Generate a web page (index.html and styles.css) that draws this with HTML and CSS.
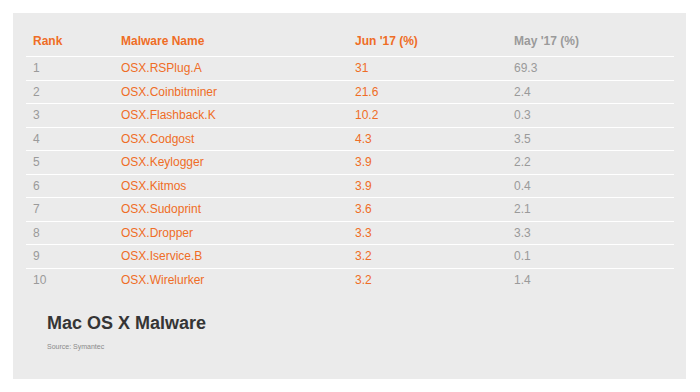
FILE: index.html
```html
<!DOCTYPE html>
<html lang="en">
<head>
<meta charset="utf-8">
<title>Mac OS X Malware</title>
<link rel="stylesheet" href="styles.css">
</head>
<body>
<div class="page">
  <div class="panel">
    <div class="table">
      <div class="row head">
        <div class="cell">Rank</div>
        <div class="cell">Malware Name</div>
        <div class="cell">Jun '17 (%)</div>
        <div class="cell gray">May '17 (%)</div>
      </div>
      <div class="row"><div class="cell gray">1</div><div class="cell">OSX.RSPlug.A</div><div class="cell">31</div><div class="cell gray">69.3</div></div>
      <div class="row"><div class="cell gray">2</div><div class="cell">OSX.Coinbitminer</div><div class="cell">21.6</div><div class="cell gray">2.4</div></div>
      <div class="row"><div class="cell gray">3</div><div class="cell">OSX.Flashback.K</div><div class="cell">10.2</div><div class="cell gray">0.3</div></div>
      <div class="row"><div class="cell gray">4</div><div class="cell">OSX.Codgost</div><div class="cell">4.3</div><div class="cell gray">3.5</div></div>
      <div class="row"><div class="cell gray">5</div><div class="cell">OSX.Keylogger</div><div class="cell">3.9</div><div class="cell gray">2.2</div></div>
      <div class="row"><div class="cell gray">6</div><div class="cell">OSX.Kitmos</div><div class="cell">3.9</div><div class="cell gray">0.4</div></div>
      <div class="row"><div class="cell gray">7</div><div class="cell">OSX.Sudoprint</div><div class="cell">3.6</div><div class="cell gray">2.1</div></div>
      <div class="row"><div class="cell gray">8</div><div class="cell">OSX.Dropper</div><div class="cell">3.3</div><div class="cell gray">3.3</div></div>
      <div class="row"><div class="cell gray">9</div><div class="cell">OSX.Iservice.B</div><div class="cell">3.2</div><div class="cell gray">0.1</div></div>
      <div class="row"><div class="cell gray">10</div><div class="cell">OSX.Wirelurker</div><div class="cell">3.2</div><div class="cell gray">1.4</div></div>
    </div>
    <div class="caption">
      <h1 class="title">Mac OS X Malware</h1>
      <p class="source">Source: Symantec</p>
    </div>
  </div>
</div>
</body>
</html>
```
FILE: styles.css
```css
html, body {
  margin: 0;
  padding: 0;
  background: #ffffff;
}
body {
  font-family: "Liberation Sans", Arial, sans-serif;
}
.page {
  padding: 13px 14px 13px 13px;
}
.panel {
  background: #ebebeb;
  height: 366px;
  box-sizing: border-box;
  padding: 13px 12px 0 13px;
}
.table {
  width: 648px;
}
.row {
  display: grid;
  grid-template-columns: 88px 234px 159px 1fr;
  height: 23.55px;
  box-sizing: border-box;
  border-top: 1px solid #ffffff;
  font-size: 12px;
  line-height: 22.55px;
  color: #ef6d26;
}
.row.head {
  height: 30px;
  line-height: 30px;
  border-top: none;
  font-weight: bold;
}
.cell {
  padding-left: 7px;
  white-space: nowrap;
}
.gray {
  color: #9a9a9a;
}
.caption {
  padding: 21px 0 0 21px;
}
.title {
  margin: 0;
  font-size: 18px;
  line-height: 22px;
  font-weight: bold;
  color: #353535;
}
.source {
  margin: 8px 0 0;
  font-size: 7px;
  line-height: 10px;
  color: #8a8a8a;
}
```
